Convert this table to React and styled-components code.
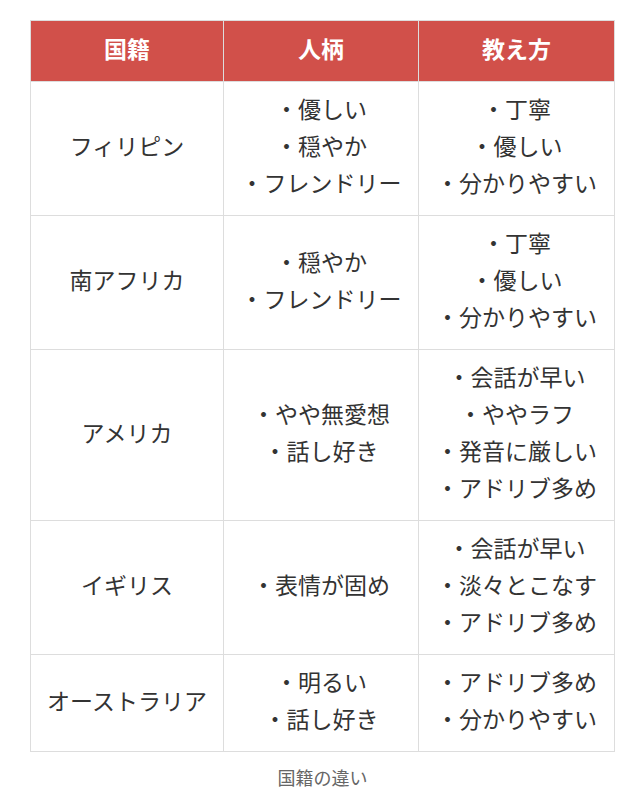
import React from 'react';
import styled, { createGlobalStyle } from 'styled-components';

const GlobalStyle = createGlobalStyle`
    body {
        margin: 0;
        background: #fff;
        font-family: 'Noto Sans CJK JP', 'Noto Sans', sans-serif;
        color: #333;
    }
`;

const rows = [
    { country: 'フィリピン', character: ['優しい', '穏やか', 'フレンドリー'], teaching: ['丁寧', '優しい', '分かりやすい'] },
    { country: '南アフリカ', character: ['穏やか', 'フレンドリー'], teaching: ['丁寧', '優しい', '分かりやすい'] },
    { country: 'アメリカ', character: ['やや無愛想', '話し好き'], teaching: ['会話が早い', 'ややラフ', '発音に厳しい', 'アドリブ多め'] },
    { country: 'イギリス', character: ['表情が固め'], teaching: ['会話が早い', '淡々とこなす', 'アドリブ多め'] },
    { country: 'オーストラリア', character: ['明るい', '話し好き'], teaching: ['アドリブ多め', '分かりやすい'] },
];

function App() {
    return (
        <>
            <GlobalStyle />
            <Page>
                <Figure>
                    <Table>
                        <colgroup>
                            <col style={{ width: 193 }} />
                            <col style={{ width: 195 }} />
                            <col style={{ width: 196 }} />
                        </colgroup>
                        <thead>
                            <tr>
                                <Head>国籍</Head>
                                <Head>人柄</Head>
                                <Head>教え方</Head>
                            </tr>
                        </thead>
                        <tbody>
                            {rows.map((r) => (
                                <tr key={r.country}>
                                    <Cell>{r.country}</Cell>
                                    <Cell>
                                        {r.character.map((c) => (
                                            <Line key={c}>・{c}</Line>
                                        ))}
                                    </Cell>
                                    <Cell>
                                        {r.teaching.map((t) => (
                                            <Line key={t}>・{t}</Line>
                                        ))}
                                    </Cell>
                                </tr>
                            ))}
                        </tbody>
                    </Table>
                    <Caption>国籍の違い</Caption>
                </Figure>
            </Page>
        </>
    );
}

export default App;

const Page = styled.div`
    padding: 20px 0 0 30px;
`;

const Figure = styled.figure`
    margin: 0;
    width: 585px;
`;

const Table = styled.table`
    width: 585px;
    border-collapse: collapse;
    table-layout: fixed;
`;

const Head = styled.th`
    background-color: #d1504a;
    color: #fff;
    font-weight: bold;
    font-size: 23px;
    line-height: 37px;
    padding: 9px 0 14px;
    border: 1px solid #ddd;
    text-align: center;
`;

const Cell = styled.td`
    font-size: 23px;
    line-height: 37px;
    padding: 8px 0 14px;
    border: 1px solid #ddd;
    text-align: center;
    vertical-align: middle;
`;

const Line = styled.div`
    white-space: nowrap;
`;

const Caption = styled.figcaption`
    margin-top: 12px;
    text-align: center;
    font-size: 18px;
    color: #666;
`;
